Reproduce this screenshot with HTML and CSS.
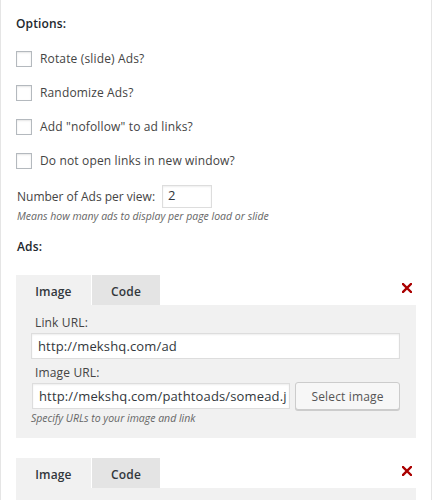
FILE: index.html
```html
<!DOCTYPE html>
<html>
<head>
<meta charset="utf-8">
<link rel="stylesheet" href="styles.css">
</head>
<body>
<div class="widget">
  <h4 class="section-title">Options:</h4>
  <label class="check-row"><span class="checkbox"></span>Rotate (slide) Ads?</label>
  <label class="check-row"><span class="checkbox"></span>Randomize Ads?</label>
  <label class="check-row"><span class="checkbox"></span>Add "nofollow" to ad links?</label>
  <label class="check-row"><span class="checkbox"></span>Do not open links in new window?</label>

  <div class="per-view">
    <label>Number of Ads per view:</label>
    <span class="small-input">2</span>
  </div>
  <p class="hint">Means how many ads to display per page load or slide</p>

  <h4 class="section-title ads-title">Ads:</h4>

  <div class="ad-box">
    <div class="tabs">
      <span class="tab active">Image</span>
      <span class="tab">Code</span>
      <span class="remove">
        <svg width="10" height="10" viewBox="0 0 10 10"><path d="M1 1L9 9M9 1L1 9" stroke="#a00" stroke-width="2.4" stroke-linecap="square"/></svg>
      </span>
    </div>
    <div class="panel">
      <div class="field-label">Link URL:</div>
      <div class="text-input wide">http://mekshq.com/ad</div>
      <div class="field-label">Image URL:</div>
      <div class="input-row">
        <div class="text-input url">http://mekshq.com/pathtoads/somead.j</div>
        <span class="button">Select image</span>
      </div>
      <p class="hint panel-hint">Specify URLs to your image and link</p>
    </div>
  </div>

  <div class="ad-box">
    <div class="tabs">
      <span class="tab active">Image</span>
      <span class="tab">Code</span>
      <span class="remove">
        <svg width="10" height="10" viewBox="0 0 10 10"><path d="M1 1L9 9M9 1L1 9" stroke="#a00" stroke-width="2.4" stroke-linecap="square"/></svg>
      </span>
    </div>
    <div class="panel"></div>
  </div>
</div>
</body>
</html>
```

FILE: styles.css
```css
html, body {
  margin: 0;
  padding: 0;
  background: #fff;
}

body {
  font-family: "Open Sans", "Noto Sans", sans-serif;
  font-size: 12px;
  letter-spacing: 0.15px;
  color: #444;
}

.widget {
  width: 400px;
  padding: 0 15px;
  border-left: 1px solid #e5e5e5;
  border-right: 1px solid #e5e5e5;
  height: 500px;
  overflow: hidden;
}

.section-title {
  margin: 0;
  padding-top: 15px;
  font-size: 12px;
  font-weight: 600;
  color: #23282d;
  line-height: 18px;
}

.check-row {
  display: flex;
  align-items: center;
  gap: 8px;
  height: 16px;
  margin-top: 18px;
  line-height: 16px;
}

.checkbox {
  width: 14px;
  height: 14px;
  border: 1px solid #b4b9be;
  background: #fff;
  box-shadow: inset 0 1px 2px rgba(0, 0, 0, 0.1);
  flex: none;
}

.per-view {
  display: flex;
  align-items: center;
  gap: 7px;
  margin-top: 16px;
  padding-left: 1px;
}

.per-view label {
  letter-spacing: 0;
}

.small-input {
  width: 38px;
  height: 21px;
  line-height: 19px;
  padding: 0 5px;
  border: 1px solid #ddd;
  box-shadow: inset 0 1px 2px rgba(0, 0, 0, 0.07);
  font-size: 13px;
  color: #32373c;
}

.hint {
  margin: 1px 0 0 1px;
  font-size: 10.5px;
  letter-spacing: 0;
  font-style: italic;
  color: #666;
  line-height: 14px;
}

.ads-title {
  padding-top: 15px;
  padding-left: 1px;
}

.ad-box {
  margin-top: 19px;
}

.ad-box + .ad-box {
  margin-top: 20px;
}

.tabs {
  display: flex;
  align-items: stretch;
  height: 30px;
}

.tab {
  display: flex;
  align-items: center;
  justify-content: center;
  font-size: 12px;
  font-weight: 600;
  color: #32373c;
  background: #e4e4e4;
  width: 68px;
  padding-top: 2px;
  box-sizing: border-box;
}

.tab.active {
  background: #f1f1f1;
  width: 75px;
  margin-right: 1px;
}

.remove {
  margin-left: auto;
  margin-right: 4px;
  padding-top: 8px;
  line-height: 0;
}

.panel {
  background: #f1f1f1;
  padding: 10px 16px 13px 15px;
  min-height: 20px;
}

.field-label {
  padding-left: 4px;
  line-height: 16px;
  color: #444;
}

.text-input {
  background: #fff;
  border: 1px solid #ddd;
  box-shadow: inset 0 1px 2px rgba(0, 0, 0, 0.07);
  font-size: 13px;
  color: #32373c;
  height: 24px;
  line-height: 24px;
  padding: 0 6px;
  white-space: nowrap;
  overflow: hidden;
}

.text-input.wide {
  margin: 2px 0 6px;
}

.input-row {
  display: flex;
  align-items: center;
  gap: 5px;
  margin-top: 1px;
}

.text-input.url {
  width: 244px;
  flex: none;
  margin-left: 1px;
}

.button {
  flex: 1;
  height: 28px;
  line-height: 27px;
  box-sizing: border-box;
  text-align: center;
  border: 1px solid #ccc;
  border-radius: 3px;
  background: #f7f7f7;
  box-shadow: 0 1px 0 #ccc;
  color: #555;
  font-size: 12px;
}

.panel-hint {
  margin-top: 1px;
  margin-left: 0;
}
```
